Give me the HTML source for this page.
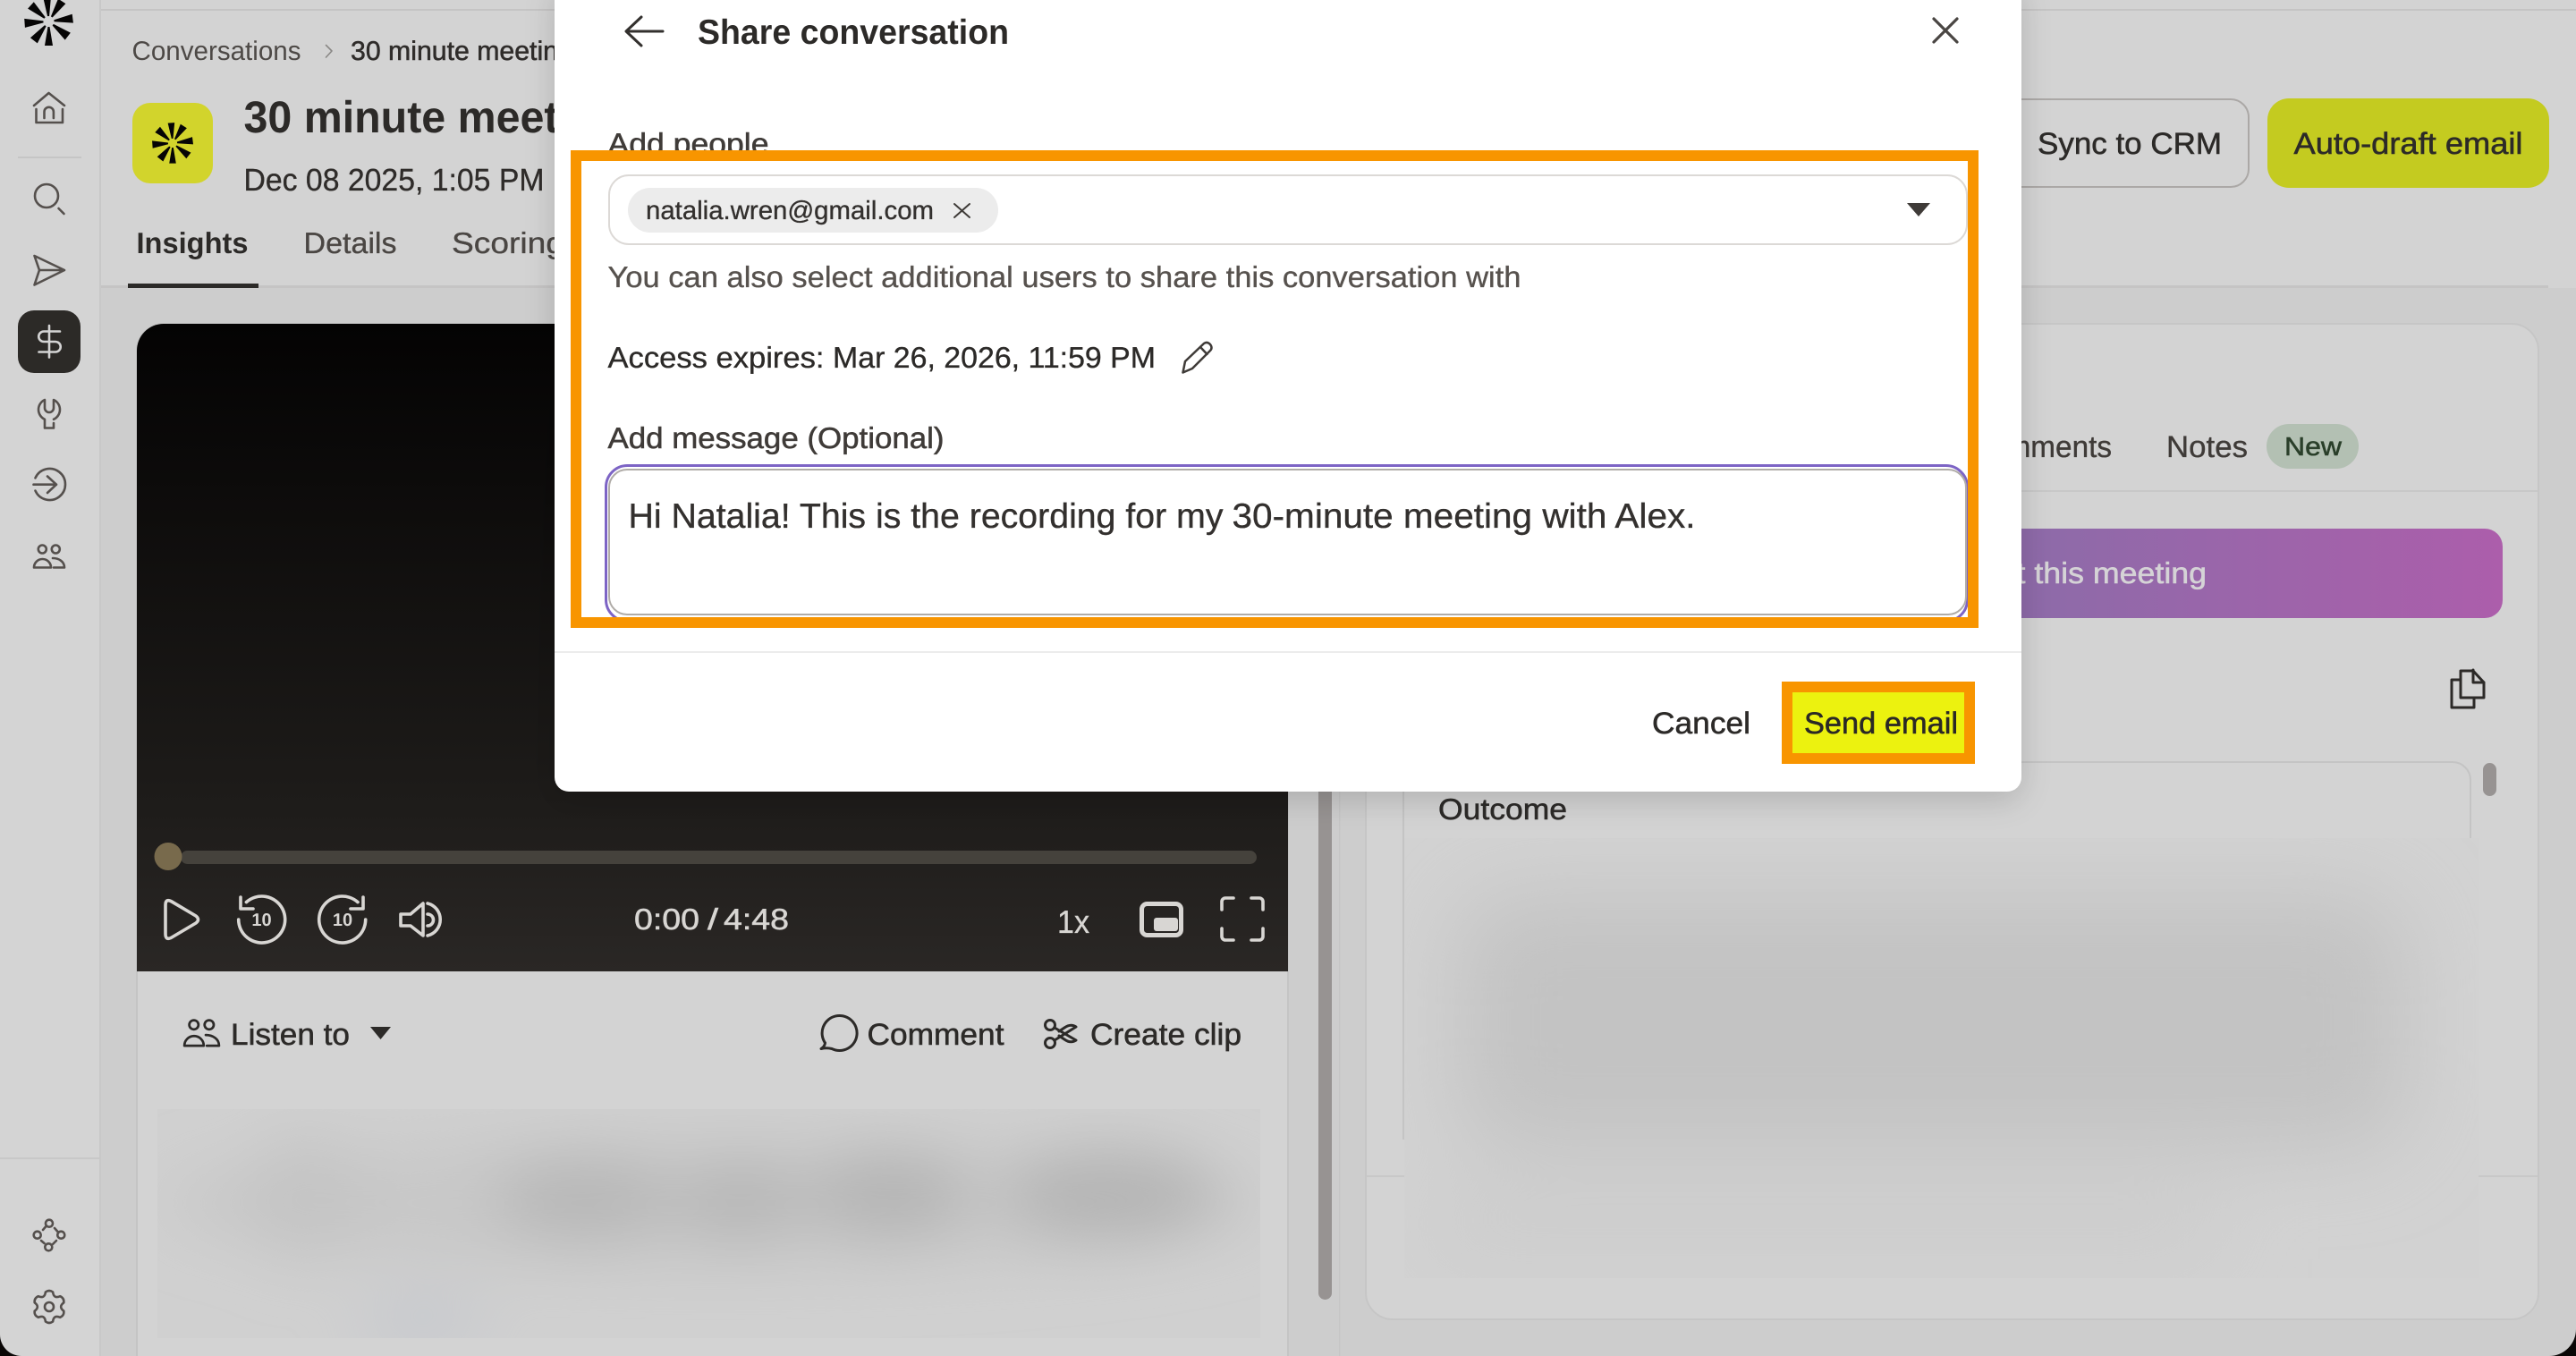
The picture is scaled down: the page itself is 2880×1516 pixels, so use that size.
<!DOCTYPE html>
<html><head><meta charset="utf-8"><title>Share conversation</title>
<style>
html,body{margin:0;padding:0;width:2880px;height:1516px;overflow:hidden;background:#cdcdcd}
svg{display:block}
text{font-family:"Liberation Sans",sans-serif;text-rendering:geometricPrecision;white-space:pre}
.m{stroke-width:.55px}
.s{stroke-width:.35px}
.b{font-weight:700}
.i{fill:none;stroke-linecap:round;stroke-linejoin:round}
</style></head><body>
<svg xmlns="http://www.w3.org/2000/svg" width="2880" height="1516" viewBox="0 0 2880 1516">
<defs>
<linearGradient id="vid" x1="0" y1="0" x2="0" y2="1"><stop offset="0" stop-color="#040303"/><stop offset=".75" stop-color="#1e1c1a"/><stop offset="1" stop-color="#2a2725"/></linearGradient>
<linearGradient id="pur" x1="0" y1="0" x2="1" y2="0"><stop offset="0" stop-color="#7c70a8"/><stop offset=".6" stop-color="#8f6aa9"/><stop offset="1" stop-color="#ac5eab"/></linearGradient>
<filter id="bl" x="-30%" y="-60%" width="160%" height="220%"><feGaussianBlur stdDeviation="34"/></filter>
<filter id="bl2" x="-30%" y="-60%" width="160%" height="220%"><feGaussianBlur stdDeviation="48"/></filter>
<filter id="sh" x="-10%" y="-10%" width="120%" height="130%"><feGaussianBlur in="SourceAlpha" stdDeviation="18"/><feOffset dy="10"/><feComponentTransfer><feFuncA type="linear" slope=".16"/></feComponentTransfer><feMerge><feMergeNode/><feMergeNode in="SourceGraphic"/></feMerge></filter>
<clipPath id="c1"><rect x="176" y="1240" width="1233" height="256"/></clipPath>
<clipPath id="c2"><rect x="1570" y="937" width="1201" height="492"/></clipPath>
<clipPath id="c3"><rect x="650" y="180" width="1550" height="510"/></clipPath>
</defs>

<!-- backgrounds -->
<rect width="2880" height="1516" fill="#cdcdcd"/>
<rect x="112" y="0" width="2768" height="322" fill="#d3d3d3"/>
<rect x="0" y="0" width="112" height="1516" fill="#d4d4d4"/>
<rect x="111" y="0" width="2" height="1516" fill="#c8c8c8"/>
<rect x="113" y="10" width="2767" height="2" fill="#c5c4c4"/>
<rect x="113" y="319" width="2736" height="3" fill="#c5c4c4"/>
<rect x="20" y="175" width="71" height="2" fill="#c5c5c5"/>
<rect x="0" y="1294" width="111" height="2" fill="#c8c8c8"/>

<!-- sidebar logo -->
<g fill="#060505" transform="translate(54.5 24)">
<polygon points="-1,-6 -4.5,-28 4.5,-28 1,-6" transform="rotate(-4)"/>
<polygon points="-1,-6 -5,-27 5,-27 1,-6" transform="rotate(33)"/>
<polygon points="-1,-6 -5,-27 5,-27 1,-6" transform="rotate(83)"/>
<polygon points="-1,-6 -5,-27 5,-27 1,-6" transform="rotate(128)"/>
<polygon points="-1,-6 -4.5,-27 4.5,-27 1,-6" transform="rotate(180)"/>
<polygon points="-1,-6 -5,-27 5,-27 1,-6" transform="rotate(218)"/>
<polygon points="-1,-6 -5,-27 5,-27 1,-6" transform="rotate(266)"/>
<polygon points="-1,-6 -5,-27 5,-27 1,-6" transform="rotate(312)"/>
</g>

<!-- sidebar icons -->
<g class="i" stroke="#55504d" stroke-width="2.6">
<path d="M38 118 L54.5 104 L72 118"/><path d="M40.500 122 V137 H70 V122"/><path d="M49.500 132 V125 a5.200 5.200 0 0 1 10.400 0 V132"/>
<circle cx="52" cy="219" r="13"/><path d="M65.500 233 L71.500 239"/>
<path d="M38.500 286 L72 302 L38.500 318.500 L44 302 Z M44 302 H72"/>
<path d="M60 473 V478.500 H50 V468.800 A12 12 0 0 1 50 447 V456 a5 5 0 0 0 10 0 V447 A12 12 0 0 1 60 468.800"/>
<path d="M39.500 534.400 A17.500 17.500 0 1 1 39.500 548.600"/><path d="M37.500 541.700 H63 M53 532.500 L63 541.700 L53 551"/>
<circle cx="47.300" cy="614" r="4.500"/><circle cx="62.300" cy="614" r="4.500"/>
<path d="M38 634.500 a9.500 9.500 0 0 1 19 0 Z"/><path d="M59 624 c7 0 13 4 13 10.500 H60"/>
<circle cx="55" cy="1367.700" r="4"/><circle cx="68.300" cy="1380.700" r="4"/><circle cx="41.700" cy="1380.700" r="4"/><circle cx="54.300" cy="1394.300" r="4"/>
<path d="M48 1375 L51 1371.500 M61 1373 L64.500 1377 M63 1387 L59 1391 M46 1387 L49.500 1390"/>
<g transform="translate(55 1461)"><path d="M-4.100,-16.500 Q0,-19.500 4.100,-16.500 Q5,-8.700 12.200,-11.800 Q16.900,-9.750 16.300,-4.700 Q10,0 16.300,4.700 Q16.900,9.750 12.200,11.800 Q5,8.700 4.100,16.500 Q0,19.500 -4.100,16.500 Q-5,8.700 -12.200,11.800 Q-16.900,9.750 -16.300,4.700 Q-10,0 -16.300,-4.700 Q-16.900,-9.750 -12.200,-11.800 Q-5,-8.700 -4.100,-16.500Z"/><circle r="5"/></g>
</g>
<rect x="20" y="347" width="70" height="70" rx="18" fill="#2c2a27"/>
<g class="i" stroke="#d4d4d4" stroke-width="2.600"><path d="M55 364 V399.500"/><path d="M67 370.500 H49 a5.750 5.750 0 0 0 0 11.500 H62 a5.750 5.750 0 0 1 0 11.500 H43.500"/></g>

<!-- header -->
<text x="147.500" y="67" font-size="30" fill="#4d4946" textLength="189" lengthAdjust="spacingAndGlyphs">Conversations</text>
<path class="i" d="M364.500 50.500 L371 57 L364.500 64" stroke="#8a8886" stroke-width="1.600"/>
<text class="m" stroke="#2f2c2a" x="392" y="67" font-size="30" fill="#2f2c2a" textLength="232" lengthAdjust="spacingAndGlyphs">30 minute meetin</text>
<rect x="148" y="115" width="90" height="90" rx="20" fill="#d2d42c"/>
<g fill="#060505" transform="translate(193 160) scale(.84)">
<polygon points="-1,-6 -4.500,-27 4.500,-27 1,-6" transform="rotate(-4)"/>
<polygon points="-1,-6 -5,-27 5,-27 1,-6" transform="rotate(33)"/>
<polygon points="-1,-6 -5,-27 5,-27 1,-6" transform="rotate(83)"/>
<polygon points="-1,-6 -5,-27 5,-27 1,-6" transform="rotate(128)"/>
<polygon points="-1,-6 -4.500,-27 4.500,-27 1,-6" transform="rotate(180)"/>
<polygon points="-1,-6 -5,-27 5,-27 1,-6" transform="rotate(218)"/>
<polygon points="-1,-6 -5,-27 5,-27 1,-6" transform="rotate(266)"/>
<polygon points="-1,-6 -5,-27 5,-27 1,-6" transform="rotate(312)"/>
</g>
<text class="b" x="272.500" y="148" font-size="50" fill="#2c2a28" textLength="352" lengthAdjust="spacingAndGlyphs">30 minute meet</text>
<text class="s" stroke="#2f2c2a" x="272.500" y="213" font-size="35" fill="#2f2c2a" textLength="336" lengthAdjust="spacingAndGlyphs">Dec 08 2025, 1:05 PM</text>
<text class="b" x="152.500" y="283" font-size="33" fill="#2c2a28" textLength="125" lengthAdjust="spacingAndGlyphs">Insights</text>
<text class="s" stroke="#4a4643" x="339.500" y="283" font-size="33" fill="#4a4643" textLength="104" lengthAdjust="spacingAndGlyphs">Details</text>
<text class="s" stroke="#4a4643" x="505" y="283" font-size="33" fill="#4a4643" textLength="126" lengthAdjust="spacingAndGlyphs">Scoring</text>
<rect x="143" y="317" width="146" height="5" fill="#2c2a28"/>

<rect x="2100" y="111" width="414" height="98" rx="20" fill="none" stroke="#aba8a6" stroke-width="2"/>
<text class="m" stroke="#2c2a28" x="2278" y="172" font-size="34" fill="#2c2a28" textLength="206" lengthAdjust="spacingAndGlyphs">Sync to CRM</text>
<rect x="2535" y="110" width="315" height="100" rx="24" fill="#c4cb20"/>
<text class="m" stroke="#2c2a28" x="2564.500" y="172" font-size="34" fill="#2c2a28" textLength="256" lengthAdjust="spacingAndGlyphs">Auto-draft email</text>

<!-- left panel -->
<path d="M153 1530 V392 a30 30 0 0 1 30 -30 H1440 V1530" fill="#d3d3d3" stroke="#c4c4c4" stroke-width="2"/>
<path d="M153 1086 V392 a30 30 0 0 1 30 -30 H1440 V1086 Z" fill="url(#vid)"/>
<rect x="202" y="951" width="1203" height="15" rx="7.500" fill="#45423c"/>
<ellipse cx="188" cy="957.500" rx="15.500" ry="15.500" fill="#786a4c"/>
<g class="i" stroke="#d8d6d3" stroke-width="3.600">
<path d="M185 1012 Q185 1004 192 1008 L219 1024 Q224 1028 219 1032 L192 1048 Q185 1052 185 1044 Z"/>
<path d="M266.700 1028 A26 26 0 1 0 275.400 1008.600"/><path d="M269 1003 V1016 H283"/>
<path d="M408.700 1028 A26 26 0 1 1 400 1008.600"/><path d="M406 1003 V1016 H392"/>
<path d="M448 1022 H459 L473 1010 V1046 L459 1035 H448 Z"/>
<path d="M478 1010 A18.500 18.500 0 0 1 478 1046"/><path d="M478 1022 a6.500 6.500 0 0 1 0 13"/>
<path d="M1366 1017 V1008 a4 4 0 0 1 4 -4 H1379 M1399 1004 H1408 a4 4 0 0 1 4 4 V1017 M1412 1038 V1047 a4 4 0 0 1 -4 4 H1399 M1379 1051 H1370 a4 4 0 0 1 -4 -4 V1038"/>
</g>
<rect x="1276.500" y="1010.500" width="44" height="35" rx="6" fill="none" stroke="#d8d6d3" stroke-width="5"/>
<rect x="1290" y="1026" width="27" height="15" rx="3" fill="#d8d6d3"/>
<text class="b" x="292.500" y="1035" font-size="20" fill="#d8d6d3" text-anchor="middle">10</text>
<text class="b" x="383" y="1035" font-size="20" fill="#d8d6d3" text-anchor="middle">10</text>
<text class="m" stroke="#d8d6d3" x="709" y="1039" font-size="33" fill="#d8d6d3" textLength="73" lengthAdjust="spacingAndGlyphs">0:00</text>
<text class="m" stroke="#d8d6d3" x="791" y="1039" font-size="33" fill="#d8d6d3" textLength="12" lengthAdjust="spacingAndGlyphs">/</text>
<text class="m" stroke="#d8d6d3" x="809" y="1039" font-size="33" fill="#d8d6d3" textLength="73" lengthAdjust="spacingAndGlyphs">4:48</text>
<text class="s" stroke="#d8d6d3" x="1182" y="1043" font-size="36" fill="#d8d6d3" textLength="36" lengthAdjust="spacingAndGlyphs">1x</text>

<g class="i" stroke="#2c2a28" stroke-width="2.400" transform="translate(205 1140) scale(1.14) translate(-37 -609)">
<circle cx="47.300" cy="614" r="4.500"/><circle cx="62.300" cy="614" r="4.500"/>
<path d="M38 634.500 a9.500 9.500 0 0 1 19 0 Z"/><path d="M59 624 c7 0 13 4 13 10.500 H60"/>
</g>
<text class="m" stroke="#2c2a28" x="258" y="1168" font-size="34" fill="#2c2a28" textLength="133" lengthAdjust="spacingAndGlyphs">Listen to</text>
<polygon points="414,1148 437,1148 425.500,1162" fill="#2c2a28"/>
<path class="i" stroke="#2c2a28" stroke-width="3" d="M922.500 1166 A19.500 19.500 0 1 1 930 1172.500 Q924 1171 918 1172.500 Q922 1170 922.500 1166 Z"/>
<text class="m" stroke="#2c2a28" x="969.500" y="1168" font-size="34" fill="#2c2a28" textLength="153" lengthAdjust="spacingAndGlyphs">Comment</text>
<g class="i" stroke="#2c2a28" stroke-width="3">
<circle cx="1174" cy="1146" r="5.500"/><circle cx="1174" cy="1166" r="5.500"/>
<path d="M1179 1149 L1203 1163 Q1197 1167 1190 1162 L1184 1158 M1179 1163 L1203 1148 Q1197 1144 1190 1149 L1184 1153"/>
</g>
<text class="m" stroke="#2c2a28" x="1219" y="1168" font-size="34" fill="#2c2a28" textLength="169" lengthAdjust="spacingAndGlyphs">Create clip</text>

<rect x="176" y="1240" width="1233" height="256" fill="#d0d0d0"/>
<g clip-path="url(#c1)"><g filter="url(#bl)">
<ellipse cx="800" cy="1345" rx="620" ry="75" fill="#c8c8c8"/>
<ellipse cx="339" cy="1340" rx="60" ry="70" fill="#c4c4c4"/>
<ellipse cx="654" cy="1340" rx="100" ry="42" fill="#b6b6b6"/>
<ellipse cx="828" cy="1342" rx="70" ry="42" fill="#b6b6b6"/>
<ellipse cx="994" cy="1335" rx="90" ry="45" fill="#b4b4b4"/>
<ellipse cx="1243" cy="1335" rx="120" ry="50" fill="#b4b4b4"/>
<ellipse cx="472" cy="1478" rx="70" ry="24" fill="#c4c7ce"/>
</g></g>

<!-- scrollbar + divider -->
<rect x="1474" y="700" width="15" height="753" rx="7.500" fill="#979392"/>
<rect x="1497" y="322" width="1.500" height="1194" fill="#c6c6c6"/>

<!-- right panel -->
<rect x="1527" y="362" width="1311" height="1113" rx="30" fill="#d3d3d3" stroke="#c6c6c6" stroke-width="2"/>
<text class="s" stroke="#3f3b38" x="2200" y="511" font-size="34" fill="#3f3b38" textLength="161" lengthAdjust="spacingAndGlyphs">Comments</text>
<text class="s" stroke="#3f3b38" x="2422" y="511" font-size="34" fill="#3f3b38" textLength="91" lengthAdjust="spacingAndGlyphs">Notes</text>
<rect x="2534" y="474" width="103" height="50" rx="25" fill="#b3c0b3"/>
<text class="m" stroke="#2a3f2a" x="2554" y="509" font-size="29" fill="#2a3f2a" textLength="64" lengthAdjust="spacingAndGlyphs">New</text>
<rect x="1528" y="548" width="1309" height="2" fill="#c8c8c8"/>
<rect x="1560" y="591" width="1238" height="100" rx="20" fill="url(#pur)"/>
<text class="m" stroke="#d5d3d6" x="2175" y="652" font-size="33" fill="#d5d3d6" textLength="292" lengthAdjust="spacingAndGlyphs">about this meeting</text>
<g class="i" stroke="#2c2a28" stroke-width="3"><path d="M2751 750 H2765 L2777 763 V780 H2751 Z"/><path d="M2765 749 V763 H2777"/><path d="M2750 760 H2741 V791 H2766 V782"/></g>
<path d="M1569 1274 V872 a20 20 0 0 1 20 -20 H2742 a20 20 0 0 1 20 20 V937" fill="none" stroke="#c4c4c4" stroke-width="2"/>
<rect x="2776" y="853" width="15" height="37" rx="7.500" fill="#979392"/>
<text class="m" stroke="#2c2a28" x="1608" y="916" font-size="33" fill="#2c2a28" textLength="144" lengthAdjust="spacingAndGlyphs">Outcome</text>
<rect x="1528" y="1314" width="1309" height="2" fill="#c8c8c8"/>
<rect x="1570" y="937" width="1201" height="492" fill="#d2d2d2"/>
<g clip-path="url(#c2)"><g filter="url(#bl2)">
<rect x="1630" y="1000" width="1060" height="285" rx="60" fill="#c3c3c3"/>
<rect x="1600" y="1335" width="880" height="70" fill="#cccccc"/>
</g></g>

<!-- window corners -->
<path d="M0 1492 V1516 H24 A24 24 0 0 1 0 1492 Z" fill="#0a0706"/>
<path d="M2880 1486 V1516 H2850 A30 30 0 0 0 2880 1486 Z" fill="#0a0706"/>

<!-- modal -->
<path d="M620 -20 H2260 V869 a16 16 0 0 1 -16 16 H636 a16 16 0 0 1 -16 -16 Z" fill="#fff" filter="url(#sh)"/>
<g class="i" stroke="#33302e" stroke-width="3"><path d="M741 35 H701 M717 19 L700 35 L717 51"/></g>
<text class="b" x="780" y="49" font-size="39" fill="#2c2a28" textLength="348" lengthAdjust="spacingAndGlyphs">Share conversation</text>
<g class="i" stroke="#4a4643" stroke-width="3.200"><path d="M2162 21 L2188 47 M2188 21 L2162 47"/></g>
<text class="m" stroke="#3f3b38" x="679.500" y="172" font-size="33" fill="#3f3b38" textLength="180" lengthAdjust="spacingAndGlyphs">Add people</text>
<rect x="681" y="196" width="1518" height="77" rx="22" fill="#fff" stroke="#dcd9d6" stroke-width="2"/>
<rect x="702" y="210" width="414" height="50" rx="25" fill="#ececec"/>
<text class="s" stroke="#33302e" x="722" y="245" font-size="29" fill="#33302e" textLength="322" lengthAdjust="spacingAndGlyphs">natalia.wren@gmail.com</text>
<g class="i" stroke="#3f3b38" stroke-width="2"><path d="M1067 228 L1084 243 M1084 228 L1067 243"/></g>
<polygon points="2132,227 2158,227 2145,242" fill="#3f3b38"/>
<text class="s" stroke="#57524e" x="679.500" y="321" font-size="33" fill="#57524e" textLength="1021" lengthAdjust="spacingAndGlyphs">You can also select additional users to share this conversation with</text>
<text class="s" stroke="#2c2a28" x="679.500" y="411" font-size="33" fill="#2c2a28" textLength="242" lengthAdjust="spacingAndGlyphs">Access expires:</text>
<text class="s" stroke="#2c2a28" x="931" y="411" font-size="33" fill="#2c2a28" textLength="361" lengthAdjust="spacingAndGlyphs">Mar 26, 2026, 11:59 PM</text>
<path class="i" stroke="#3f3b38" stroke-width="2.500" d="M1322.500 416.500 L1325 404 L1346 384 Q1349.500 381.500 1353 385 Q1356 389 1353 392 L1333 412 Z M1342 388 L1349.500 396"/>
<text class="m" stroke="#3f3b38" x="679.500" y="501" font-size="33" fill="#3f3b38" textLength="376" lengthAdjust="spacingAndGlyphs">Add message (Optional)</text>
<g clip-path="url(#c3)"><rect x="677.500" y="520.500" width="1522" height="174" rx="24" fill="#fff" stroke="#7d64c5" stroke-width="3"/></g>
<rect x="681" y="525" width="1517" height="162" rx="20" fill="#fff" stroke="#b0aca8" stroke-width="2"/>
<text class="s" stroke="#33302e" x="702.500" y="590" font-size="39" fill="#33302e" textLength="665" lengthAdjust="spacingAndGlyphs">Hi Natalia! This is the recording for my</text>
<text class="s" stroke="#33302e" x="1377.500" y="590" font-size="39" fill="#33302e" textLength="518" lengthAdjust="spacingAndGlyphs">30-minute meeting with Alex.</text>
<rect x="644" y="174" width="1562" height="522" fill="none" stroke="#f89500" stroke-width="12"/>
<rect x="620" y="728" width="1640" height="2" fill="#ececec"/>
<text class="m" stroke="#2c2a28" x="1847" y="820" font-size="34" fill="#2c2a28" textLength="110" lengthAdjust="spacingAndGlyphs">Cancel</text>
<rect x="2004" y="774" width="192" height="68" fill="#ecf20f"/>
<rect x="1998" y="768" width="204" height="80" fill="none" stroke="#f89500" stroke-width="12"/>
<text class="m" stroke="#2a2826" x="2017" y="820" font-size="34" fill="#2a2826" textLength="172" lengthAdjust="spacingAndGlyphs">Send email</text>
</svg>
</body></html>
